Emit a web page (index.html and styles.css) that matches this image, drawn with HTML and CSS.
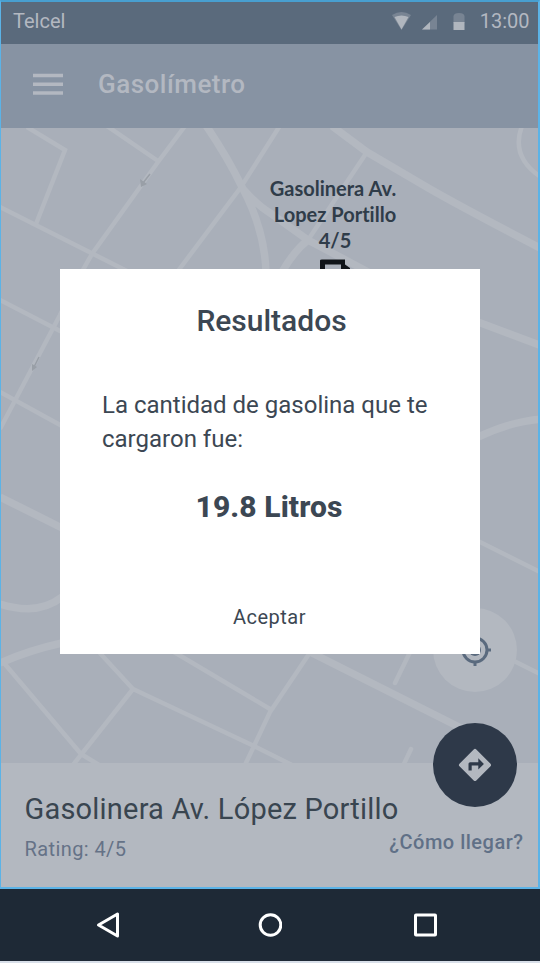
FILE: index.html
```html
<!DOCTYPE html>
<html lang="es">
<head>
<meta charset="utf-8">
<title>Gasolímetro</title>
<link rel="stylesheet" href="styles.css">
</head>
<body>
<div class="phone">
  <main class="screen">
    <header class="status">
      <span class="carrier">Telcel</span>
      <svg class="status-icons" width="46" height="22" viewBox="0 0 46 22">
        <path class="dim" d="M0 4Q9.500-2 19 4L9.500 19Z"/>
        <path class="lit" d="M2.500 6Q9.500 3 16.500 6L9.500 18.500Z"/>
        <path class="dim" d="M45 4V18.500H30Z"/>
        <path class="lit" d="M38 11V18.500H30Z"/>
      </svg>
      <svg class="battery" width="12" height="18" viewBox="0 0 12 18">
        <path class="dim" d="M.5 3Q1 0 6 0T11.500 3V10H.5Z"/>
        <path class="lit" d="M.5 9H11.500V17H.5Z"/>
      </svg>
      <span class="clock">13:00</span>
    </header>
    <div class="appbar">
      <svg class="menu" width="30" height="22" viewBox="0 0 30 22"><path d="M0 2.500H30M0 11.300H30M0 20H30"/></svg>
      <h1 class="app-title">Gasolímetro</h1>
    </div>
    <section class="map">
      <svg class="roads" width="540" height="636" viewBox="0 128 540 636">
        <g class="street">
          <path d="M27 127L65 150L36 224M107 126L158 161M185 126L158 162L92 254Q80 274 60 315L0 429"/>
          <path d="M-2 206L123 269L160 288M281 124L241 187L178 271M367 152L308 240"/>
          <path d="M522 126Q510 157 542 178M0 300L62 332M0 392L62 426M478 541L542 573"/>
          <path d="M4 663L81 754L99 765M98 651L133 689L73 765M133 689L254 746L292 765M174 652L270 709M309 654L270 712L245 765"/>
          <path stroke-linecap="round" d="M411 650L395 683M411 749L403 766"/>
          <path d="M510 659L542 675"/>
        </g>
        <g class="avenue">
          <path d="M205 124Q227 156 242 187Q265 230 266 273M242 188Q257 205 270 213L308 240L370 273M332 126L367 152L430 189Q465 209 542 249M308 240Q294 251 282 272"/>
          <path d="M0 497L62 528M0 604Q38 616 62 597M0 663Q30 650 62 643M478 322L542 346M478 437Q512 421 542 419M310 652L475 735"/>
        </g>
        <path class="oneway" d="M150 174L143 183M39 357L34 367"/>
        <path class="oneway-head" d="M140 179L147 184L141 187ZM32 364L37 367L32 371Z"/>
      </svg>
      <div class="pin">
        <div class="pin-label">Gasolinera Av.<span class="pin-detail">Lopez Portillo<br>4/5</span></div>
        <svg width="32" height="34" viewBox="0 0 32 34"><path d="M1 34V1.500Q1 .5 3 .5H26V5.500L31 9V34H22V5.500H6V34Z" fill="#101419"/></svg>
      </div>
      <div class="fab locate">
        <svg width="34" height="34" viewBox="0 0 34 34"><circle cx="17" cy="17" r="12"/><circle class="core" cx="17" cy="17" r="6"/><path d="M17 1V5M17 29V33M1 17H5M29 17H33"/></svg>
      </div>
    </section>
    <section class="station">
      <h2 class="station-name">Gasolinera Av. López Portillo</h2>
      <div class="rating">Rating: 4/5</div>
      <div class="directions">
        <div class="fab route">
          <svg width="34" height="34" viewBox="0 0 34 34"><path class="diamond" d="M15.700 1.500Q17 .2 18.300 1.500L32.500 15.700Q33.700 17 32.500 18.300L18.300 32.500Q17 33.700 15.700 32.500L1.500 18.300Q.2 17 1.500 15.700Z"/><path class="turn" d="M10.500 22.500V15.800Q10.500 14.200 12.200 14.200H20.300V10.200L25.900 16L20.300 21.500V17.500H13.700V22.500Z"/></svg>
        </div>
        <span class="how">¿Cómo llegar?</span>
      </div>
    </section>
    <div class="frame"></div>
    <div class="dialog" role="dialog">
      <h2 class="dialog-title">Resultados</h2>
      <p class="message">La cantidad de gasolina que te cargaron fue:</p>
      <strong class="amount">19.8 Litros</strong>
      <button class="accept">Aceptar</button>
    </div>
  </main>
  <nav class="nav">
    <svg width="24" height="28" viewBox="0 0 24 28"><path d="M21.500 3V25L2.500 14Z"/></svg>
    <svg width="24" height="28" viewBox="0 0 24 28"><circle cx="12.500" cy="14" r="10.300"/></svg>
    <svg width="24" height="28" viewBox="0 0 24 28"><rect x="2.500" y="4" width="20" height="20" rx=".5"/></svg>
  </nav>
</div>
</body>
</html>
```
FILE: styles.css
```css
* { box-sizing: border-box; }
body { margin: 0; background: #d8dfe9; font-family: Roboto, sans-serif; }
h1, h2, p { margin: 0; }
.phone { width: 540px; height: 963px; display: flex; flex-direction: column; }
.screen { position: relative; height: 889px; display: flex; flex-direction: column; overflow: hidden; }
.status { height: 44px; flex: none; background: #5a6a7c; color: #b3b8c1; display: flex; align-items: center; padding: 0 10.500px 2px 13px; font-size: 20px; }
.carrier { flex: 1; }
.status-icons { margin: 1px 15px 0 0; }
.battery { margin: 2px 15px 0 0; }
.dim { fill: #788493; }
.lit { fill: #b0b6be; }
.appbar { height: 84px; flex: none; background: #8793a3; display: flex; align-items: center; gap: 35px; padding: 0 33px 4px; }
.menu path { stroke: #b3b8c1; stroke-width: 3.5; }
.app-title { font-size: 26px; line-height: 32px; font-weight: 500; letter-spacing: .5px; color: #b3b8c1; }
.map { position: relative; height: 635px; flex: none; background: #a9afb9; }
.roads { display: block; }
.street, .avenue { fill: none; stroke: #b3b8c0; stroke-width: 4.5; }
.avenue { stroke-width: 7.5; }
.oneway { fill: none; stroke: #999fa7; stroke-width: 1.5; }
.oneway-head { fill: #999fa7; }
.pin { position: absolute; left: 253px; top: 47px; width: 160px; text-align: center; }
.pin-label { font: 700 20px/26px Lato, sans-serif; font-variant-ligatures: none; color: #2f3c49; height: 84px; }
.pin-detail { display: block; padding-left: 4px; }
.pin svg { display: block; margin: 0 0 0 66px; }
.fab { width: 84px; height: 84px; border-radius: 50%; display: grid; place-items: center; }
.locate { position: absolute; left: 432.500px; top: 479.500px; background: #b3b8c0; }
.locate svg { fill: none; stroke: #5a6a7e; stroke-width: 3; }
.locate .core { fill: #5a6a7e; stroke: none; }
.station { position: relative; height: 126px; flex: none; background: #b3b8c0; padding: 26px 25px; }
.station-name { font-size: 29px; line-height: 40px; font-weight: 400; letter-spacing: .2px; color: #394550; margin-left: -.5px; }
.rating { margin-top: 7px; font-size: 20px; line-height: 26px; letter-spacing: .4px; color: #657287; margin-left: -.5px; }
.directions { position: absolute; right: 16.500px; top: -40px; display: flex; flex-direction: column; align-items: flex-end; }
.route { background: #2e3949; margin-right: 7px; }
.diamond { fill: #b3b8c0; }
.turn { fill: #2e3949; }
.how { margin-top: 22px; font-size: 20px; line-height: 26px; font-weight: 500; letter-spacing: .5px; color: #607087; }
.frame { position: absolute; inset: 0; border: solid #5bb3e7; border-width: 2px 2px 2px 1px; border-top-color: #489fd0; pointer-events: none; }
.dialog { position: absolute; left: 60px; top: 269px; width: 420px; height: 385px; background: #fff; color: #3c4753; padding: 32px 42px 0; display: flex; flex-direction: column; align-items: center; }
.dialog-title { font-size: 30px; line-height: 40px; font-weight: 500; margin-left: 3px; }
.message { margin-top: 47px; font-size: 24px; line-height: 34px; align-self: flex-start; }
.amount { margin: 31px 2px 0 0; font-size: 30px; line-height: 40px; font-weight: 800; letter-spacing: .1px; }
.accept { margin: 77px 1px 0 0; border: 0; padding: 0; background: none; color: inherit; font: 20px/26px Roboto, sans-serif; letter-spacing: .5px; }
.nav { height: 72px; flex: none; background: #1e2936; display: grid; grid-template-columns: 162.500px 155px 24px; align-items: center; padding: 0 0 0 95.500px; }
.nav svg { fill: none; stroke: #fff; stroke-width: 3; stroke-linejoin: round; }
```
